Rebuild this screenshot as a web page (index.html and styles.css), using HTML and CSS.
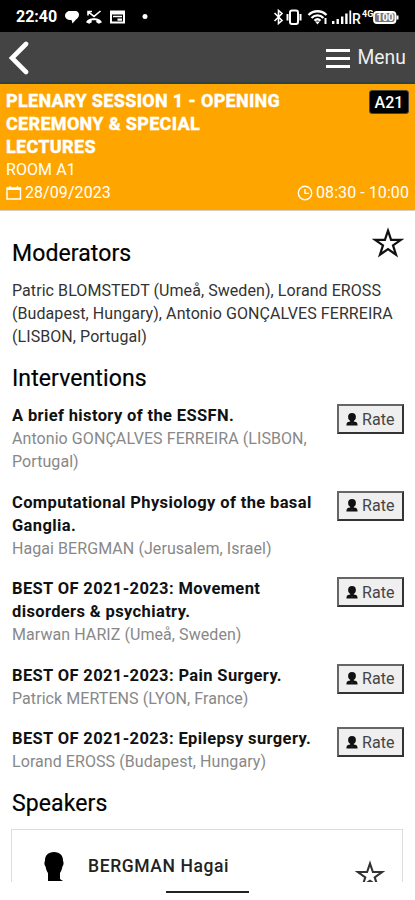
FILE: index.html
```html
<!DOCTYPE html>
<html lang="en">
<head>
    <meta charset="UTF-8">
    <title>Plenary Session 1</title>
    <link rel="stylesheet" href="styles.css">
</head>
<body>
<svg class="defs" width="0" height="0">
    <symbol id="person" viewBox="0 0 12 13">
        <circle cx="6" cy="4" r="3.9"/>
        <path d="M4.2 6h3.6v2.400l.7 1.200L6 11.200 3.500 9.600l.7-1.200z"/>
        <path d="M.4 12.500c0-2.700 1-3.500 3.100-3.900L6 11.300l2.500-2.700c2.100.4 3.100 1.200 3.100 3.900z"/>
    </symbol>
    <symbol id="star" viewBox="0 0 30 30">
        <path d="M15 3.500l2.900 8.500h9.200l-7.400 5.300 2.800 8.700-7.500-5.300L7.500 26l2.800-8.700L2.900 12h9.200z" fill="none" stroke="currentColor" stroke-width="2.1"/>
    </symbol>
</svg>

<div class="screen">
    <div class="status">
        <span class="time">22:40</span>
        <svg class="notices" width="90" height="18" viewBox="0 0 90 18" fill="#fff">
            <path d="M4.500 3h7.500c4 1 4 6 0 8.500L8.500 15.500 7.500 12H5C-.5 10.500 0 5 4.500 3z"/>
            <path d="M24 7.500V3.500h4M24.300 3.800l5.700 4.600 6.500-5.400" fill="none" stroke="#fff" stroke-width="1.600"/>
            <path d="M22 14.300c2-5.500 14-5.500 16 0l-3.200 1.400-2.500-1.500v-2h-4.600v2l-2.500 1.500z"/>
            <path d="M46 2.500h15v13H46zM48 6.500v7h11v-7z" fill-rule="evenodd"/>
            <path d="M49 7.800h9v1.500h-9zM53.500 10.500H58v2.300h-4.500z"/>
            <circle cx="81" cy="8.600" r="2.500"/>
        </svg>
        <svg class="system" width="128" height="20" viewBox="0 0 128 20">
            <g fill="none" stroke="#fff" stroke-width="1.6">
                <path d="M1.500 6l7.500 7.500-3.500 3V3.500L9 6.500 1.500 14"/>
                <rect x="17" y="3.500" width="8" height="13.500" rx="2" stroke-width="2"/>
                <path d="M14.500 7v6.500M27.500 7v6.500" stroke-width="2"/>
                <path d="M35.500 8c5-5 13-5 18 0M38.500 11c3.400-3.600 8.600-3.600 12 0M41.500 13.800c2-2 4-2 6 0" stroke-width="2.300"/>
            </g>
            <path d="M42.100 14.400h4.800l-2.400 3zM51.500 11h2v6h-2zM59 14h2.400v3H59zM63.500 12h2.400v5h-2.400zM68 9.500h2.400V17H68zM72.200 6.500h2.400V17h-2.400zM76.400 3.500h1.800V17h-1.800z" fill="#fff"/>
            <text x="79" y="17" font-size="14" font-weight="500" fill="#fff">R</text>
            <text x="89" y="9.500" font-size="9" font-weight="700" fill="#fff">4G</text>
            <rect x="101" y="5" width="21.500" height="11" rx="3" fill="#777" stroke="#fff" stroke-width="1.800"/>
            <path d="M123.500 8.500h2v4h-2z" fill="#fff"/>
            <text x="103.500" y="14.200" font-size="10" font-weight="700" fill="#fff">100</text>
        </svg>
    </div>

    <div class="navbar">
        <svg class="back" width="22" height="36" viewBox="0 0 22 36">
            <path d="M19 4L5 18l14 14" fill="none" stroke="#fff" stroke-width="4.600" stroke-linecap="round" stroke-linejoin="miter"/>
        </svg>
        <div class="menu">
            <i></i>
            <span>Menu</span>
        </div>
    </div>

    <div class="session">
        <div class="row">
            <div class="title">PLENARY SESSION 1 - OPENING<br>CEREMONY &amp; SPECIAL<br>LECTURES</div>
            <div class="code">A21</div>
        </div>
        <div class="room">ROOM A1</div>
        <div class="row">
            <div class="info">
                <svg width="16" height="16" viewBox="0 0 16 16" fill="none" stroke="currentColor" stroke-width="1.4">
                    <path d="M1 3h13.500v11H1zM1 4.200h13.500M4 1v3M11.500 1v3"/>
                </svg>
                <span>28/09/2023</span>
            </div>
            <div class="info">
                <svg width="16" height="16" viewBox="0 0 16 16" fill="none" stroke="currentColor" stroke-width="1.4">
                    <circle cx="8" cy="8" r="6.7"/>
                    <path d="M8 4v4.400h4"/>
                </svg>
                <span>08:30 - 10:00</span>
            </div>
        </div>
    </div>

    <div class="content">
        <div class="row heading">
            <h2>Moderators</h2>
            <svg class="fav" width="32" height="32"><use href="#star"/></svg>
        </div>
        <p class="moderators">Patric BLOMSTEDT (Umeå, Sweden), Lorand EROSS<br>(Budapest, Hungary), Antonio GONÇALVES FERREIRA<br>(LISBON, Portugal)</p>

        <h2>Interventions</h2>
        <ul class="list">
            <li>
                <div class="text"><b>A brief history of the ESSFN.</b><br>Antonio GONÇALVES FERREIRA (LISBON,<br>Portugal)</div>
                <a class="rate"><svg width="12" height="13"><use href="#person"/></svg>Rate</a>
            </li>
            <li>
                <div class="text"><b>Computational Physiology of the basal<br>Ganglia.</b><br>Hagai BERGMAN (Jerusalem, Israel)</div>
                <a class="rate"><svg width="12" height="13"><use href="#person"/></svg>Rate</a>
            </li>
            <li>
                <div class="text"><b>BEST OF 2021-2023: Movement<br>disorders &amp; psychiatry.</b><br>Marwan HARIZ (Umeå, Sweden)</div>
                <a class="rate"><svg width="12" height="13"><use href="#person"/></svg>Rate</a>
            </li>
            <li>
                <div class="text"><b>BEST OF 2021-2023: Pain Surgery.</b><br>Patrick MERTENS (LYON, France)</div>
                <a class="rate"><svg width="12" height="13"><use href="#person"/></svg>Rate</a>
            </li>
            <li>
                <div class="text"><b>BEST OF 2021-2023: Epilepsy surgery.</b><br>Lorand EROSS (Budapest, Hungary)</div>
                <a class="rate"><svg width="12" height="13"><use href="#person"/></svg>Rate</a>
            </li>
        </ul>

        <h2>Speakers</h2>
        <div class="speaker">
            <svg class="head" width="20" height="29" viewBox="0 0 20 29">
                <path d="M10 0c6 0 9.200 3.500 9 9 .9.800.7 4.500-.6 5.500-.4 3-1.400 5-2.400 6.500V27l3 2H4v-8C2.800 19.500 2 17.500 1.600 14.500.3 13.500.1 9.800 1 9 .8 3.500 4 0 10 0z"/>
            </svg>
            <span class="name">BERGMAN Hagai</span>
            <svg class="fav" width="30" height="30"><use href="#star"/></svg>
        </div>
    </div>

    <div class="gesture"><i></i></div>
</div>
</body>
</html>
```
FILE: styles.css
```css
* {
    box-sizing: border-box;
}
body {
    margin: 0;
    background: #fff;
    font: 16px/23.1px Roboto, sans-serif;
    letter-spacing: 0.07px;
    color: #333;
}
h2, p, ul {
    margin: 0;
    padding: 0;
}
svg {
    display: block;
    flex: none;
}
.defs {
    position: absolute;
}
.screen {
    height: 900px;
    display: flex;
    flex-direction: column;
    overflow: hidden;
    white-space: nowrap;
}
.row {
    display: flex;
    justify-content: space-between;
}

/* status bar */
.status {
    height: 32px;
    flex: none;
    display: flex;
    align-items: center;
    padding: 2px 14px 0 16px;
    background: #000;
    color: #fff;
}
.time {
    width: 48px;
    font-size: 16px;
    font-weight: 700;
    letter-spacing: 0;
}
.system {
    margin-left: auto;
    letter-spacing: 0;
}

/* nav bar */
.navbar {
    height: 52px;
    flex: none;
    display: flex;
    align-items: center;
    justify-content: space-between;
    padding: 2px 9px 0 7px;
    background: #444;
    border-bottom: 2px solid #2d4245;
    color: #fff;
}
.menu {
    display: flex;
    align-items: center;
    gap: 7px;
    font-size: 19.300px;
    color: #eee;
}
.menu i {
    width: 24px;
    height: 19px;
    border-top: 3px solid #fff;
    border-bottom: 3px solid #fff;
    background: linear-gradient(#fff, #fff) center / 24px 3px no-repeat;
}

/* session header */
.session {
    height: 127px;
    flex: none;
    padding: 5px 6px 0;
    background: #ffa500;
    border-bottom: 1px solid #d9cfc0;
    color: #fff;
}
.title {
    font-size: 18px;
    font-weight: 800;
    letter-spacing: 0.3px;
    -webkit-text-stroke: 0.3px #fff;
}
.code {
    width: 40px;
    height: 24px;
    margin-top: 1px;
    border: 1px solid #444;
    border-radius: 3px;
    background: #000;
    text-align: center;
    line-height: 23px;
    font-weight: 500;
}
.info {
    display: flex;
    align-items: center;
    gap: 3px;
}

/* content */
.content {
    height: 671px;
    flex: none;
    padding: 15px 12px 0 12px;
    overflow: hidden;
}
h2 {
    font-size: 23px;
    font-weight: 400;
    line-height: 42px;
    letter-spacing: 0.1px;
    color: #000;
    -webkit-text-stroke: 0.2px #000;
}
.heading {
    height: 53px;
}
.heading h2 {
    line-height: 56px;
}
.heading .fav {
    margin: 1px -1px 0 0;
    color: #111;
}
.moderators {
    margin-bottom: 10px;
}
.list {
    padding-top: 4px;
    list-style: none;
}
.list li {
    display: flex;
    justify-content: space-between;
    margin-bottom: 17.200px;
    color: #888;
}
.list li:last-child {
    margin-bottom: 10px;
}
.list b {
    font-size: 16.500px;
    font-weight: 700;
    line-height: 1;
    letter-spacing: 0.370px;
    color: #111;
}
.rate {
    display: flex;
    align-items: center;
    gap: 4px;
    width: 67px;
    height: 30px;
    margin: 0 -1px 0 0;
    padding-left: 7px;
    border: 2px solid #333;
    border-top-color: #666;
    border-left-color: #666;
    background: #efefef;
    color: #444;
}
.rate svg {
    fill: #111;
}
.speaker {
    display: flex;
    height: 90px;
    margin: 4px 0 0 -1px;
    padding: 22px 17px 0 32px;
    border: 1px solid #ddd;
}
.name {
    margin: 3px auto 0 24px;
    font-size: 17.500px;
    font-weight: 500;
    letter-spacing: 0.6px;
    color: #222;
}
.speaker .fav {
    margin-top: 8px;
}

.gesture {
    flex: 1;
    display: flex;
    justify-content: center;
    padding-top: 9px;
}
.gesture i {
    width: 83px;
    height: 2px;
    background: #222;
}
```
